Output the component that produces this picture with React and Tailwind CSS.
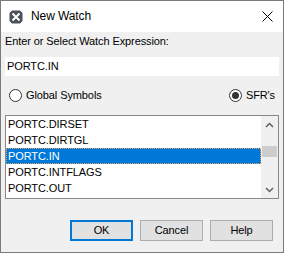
import { useState } from 'react';

const items = ['PORTC.DIRSET', 'PORTC.DIRTGL', 'PORTC.IN', 'PORTC.INTFLAGS', 'PORTC.OUT'];

function Radio({ checked, label }) {
  return (
    <div className="flex items-center gap-[4px] h-[13px]">
      <div className="w-[13px] h-[13px] rounded-full border border-[#333333] bg-white flex items-center justify-center">
        {checked && <div className="w-[7px] h-[7px] rounded-full bg-[#333333]" />}
      </div>
      <span>{label}</span>
    </div>
  );
}

export default function App() {
  const [selected, setSelected] = useState('PORTC.IN');

  return (
    <div
      className="w-[284px] h-[253px] border border-[#7a7a7a] flex flex-col text-[11px] leading-[13px] tracking-[-0.1px] text-black overflow-hidden"
      style={{ fontFamily: '"Liberation Sans", Arial, sans-serif' }}
    >
      {/* Title bar */}
      <div className="h-[31px] bg-white flex items-center shrink-0">
        <svg className="ml-[8px]" width="14" height="14" viewBox="0 0 14 14">
          <path d="M3 0.5 H11 L13.5 3 V11 L11 13.5 H3 L0.5 11 V3 Z" fill="#4b5157" />
          <path d="M3.5 3.5 L10.5 10.5 M10.5 3.5 L3.5 10.5" stroke="#ffffff" strokeWidth="2" />
        </svg>
        <span className="ml-[8px] text-[12px]">New Watch</span>
        <svg className="ml-auto mr-[10px]" width="11" height="11" viewBox="0 0 11 11">
          <path d="M0.5 0.5 L10.5 10.5 M10.5 0.5 L0.5 10.5" stroke="#000000" strokeWidth="1" />
        </svg>
      </div>

      {/* Body */}
      <div className="flex-1 bg-[#f0f0f0] px-[4px] flex flex-col">
        <div className="mt-[3px]">Enter or Select Watch Expression:</div>

        <div className="mt-[9px] h-[19px] shrink-0 bg-white flex items-center pl-[2px]">PORTC.IN</div>

        <div className="mt-[13px] flex items-center justify-between pl-[4px] pr-[4px]">
          <Radio label="Global Symbols" />
          <Radio checked label="SFR's" />
        </div>

        <div className="mt-[13px] h-[84px] shrink-0 border border-[#828790] bg-white flex">
          <div className="flex-1 flex flex-col">
            {items.map((item) => (
              <div
                key={item}
                onClick={() => setSelected(item)}
                className={
                  item === selected
                    ? 'h-[16px] flex items-center pl-[1px] bg-[#0078d7] text-white border border-dotted border-[#e9a15a]'
                    : 'h-[16px] flex items-center pl-[2px]'
                }
              >
                {item}
              </div>
            ))}
          </div>
          <div className="w-[17px] bg-[#f0f0f0] flex flex-col items-center">
            <svg className="mt-[6px]" width="9" height="6" viewBox="0 0 9 6">
              <path d="M1 5 L4.5 1.5 L8 5" stroke="#606060" strokeWidth="1.5" fill="none" />
            </svg>
            <div className="mt-[18px] w-[15px] h-[11px] bg-[#cdcdcd]" />
            <svg className="mt-auto mb-[5px]" width="9" height="6" viewBox="0 0 9 6">
              <path d="M1 1 L4.5 4.5 L8 1" stroke="#606060" strokeWidth="1.5" fill="none" />
            </svg>
          </div>
        </div>

        <div className="mt-[21px] flex justify-end gap-[7px] pr-[6px]">
          <button className="w-[63px] h-[21px] bg-[#e1e1e1] border-2 border-[#0078d7]">OK</button>
          <button className="w-[63px] h-[21px] bg-[#e1e1e1] border border-[#adadad]">Cancel</button>
          <button className="w-[63px] h-[21px] bg-[#e1e1e1] border border-[#adadad]">Help</button>
        </div>
      </div>
    </div>
  );
}
